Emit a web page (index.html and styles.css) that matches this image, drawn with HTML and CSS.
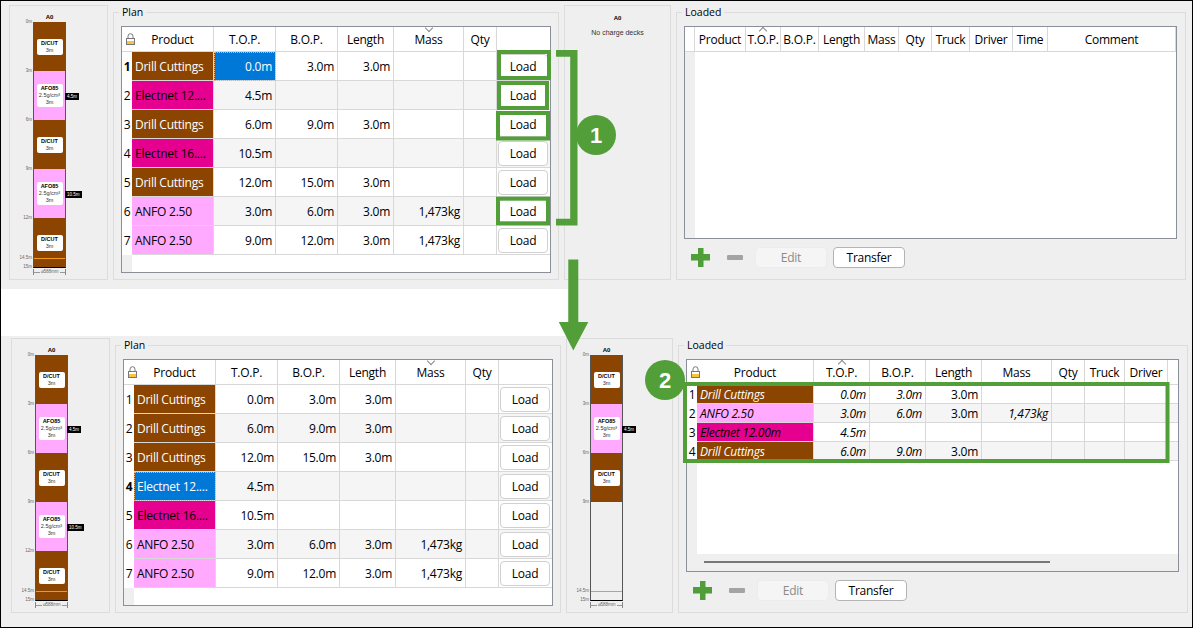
FILE: index.html
```html
<!DOCTYPE html>
<html lang="en">
  <head>
    <meta charset="UTF-8" />
    <title>Plan and Loaded decks</title>
    <link rel="stylesheet" href="styles.css">
  </head>
  <body>
    <div class="shot">

      <!-- before loading -->
      <div class="window window-top">
        <div class="panel strip-panel">
          <div class="strip-title">A0</div>
          <div class="column">
            <div class="seg brown"><span class="depth">0m</span><div class="card"><b>D/CUT</b>3m</div></div>
            <div class="seg pink"><span class="depth">3m</span><div class="card"><b>AFO85</b>2.5g/cm³<br>3m</div><span class="tag">4.5m</span></div>
            <div class="seg brown"><span class="depth">6m</span><div class="card"><b>D/CUT</b>3m</div></div>
            <div class="seg pink"><span class="depth">9m</span><div class="card"><b>AFO85</b>2.5g/cm³<br>3m</div><span class="tag">10.5m</span></div>
            <div class="seg brown"><span class="depth">12m</span><div class="card"><b>D/CUT</b>3m</div></div>
            <span class="depth depth-water">14.5m</span>
            <span class="depth depth-end">15m</span>
            <div class="water"></div>
          </div>
          <div class="dim">⌀588mm</div>
        </div>

        <fieldset class="group group-plan">
          <legend>Plan</legend>
          <div class="frame frame-plan">
            <table class="grid plan-grid">
              <colgroup><col class="c10"><col class="c82"><col class="c62"><col class="c62"><col class="c56"><col class="c70"><col class="c33"><col class="c53"></colgroup>
              <tr>
                <th class="corner"><svg class="lock" width="9" height="12" viewBox="0 0 9 12"><path d="M2 6V3.2a2.5 2.5 0 0 1 5 0V6" fill="none" stroke="#777"/><rect x=".5" y="5.5" width="8" height="6" fill="#fff" stroke="#777"/><rect x="1" y="8" width="7" height="3" fill="#f7c43c"/></svg></th>
                <th>Product</th><th>T.O.P.</th><th>B.O.P.</th><th>Length</th><th class="sort-down">Mass</th><th>Qty</th><th class="last"></th>
              </tr>
              <tr>
                <td class="num current">1</td><td class="product brown-cell">Drill Cuttings</td><td class="val selected">0.0m</td><td class="val">3.0m</td><td class="val">3.0m</td><td></td><td></td><td class="action"><button>Load</button></td>
              </tr>
              <tr class="alt">
                <td class="num">2</td><td class="product magenta-cell">Electnet 12....</td><td class="val">4.5m</td><td></td><td></td><td></td><td></td><td class="action"><button>Load</button></td>
              </tr>
              <tr>
                <td class="num">3</td><td class="product brown-cell">Drill Cuttings</td><td class="val">6.0m</td><td class="val">9.0m</td><td class="val">3.0m</td><td></td><td></td><td class="action"><button>Load</button></td>
              </tr>
              <tr class="alt">
                <td class="num">4</td><td class="product magenta-cell">Electnet 16....</td><td class="val">10.5m</td><td></td><td></td><td></td><td></td><td class="action"><button>Load</button></td>
              </tr>
              <tr>
                <td class="num">5</td><td class="product brown-cell">Drill Cuttings</td><td class="val">12.0m</td><td class="val">15.0m</td><td class="val">3.0m</td><td></td><td></td><td class="action"><button>Load</button></td>
              </tr>
              <tr class="alt">
                <td class="num">6</td><td class="product pink-cell">ANFO 2.50</td><td class="val">3.0m</td><td class="val">6.0m</td><td class="val">3.0m</td><td class="val">1,473kg</td><td></td><td class="action"><button>Load</button></td>
              </tr>
              <tr>
                <td class="num">7</td><td class="product pink-cell">ANFO 2.50</td><td class="val">9.0m</td><td class="val">12.0m</td><td class="val">3.0m</td><td class="val">1,473kg</td><td></td><td class="action"><button>Load</button></td>
              </tr>
            </table>
            <div class="filler"></div>
          </div>
        </fieldset>

        <div class="panel strip-panel-wide">
          <div class="strip-title strip-title-wide">A0</div>
          <div class="no-decks">No charge decks</div>
        </div>

        <fieldset class="group group-loaded">
          <legend>Loaded</legend>
          <div class="frame frame-loaded">
            <table class="grid">
              <colgroup><col class="c10"><col class="c51"><col class="c35"><col class="c38"><col class="c46"><col class="c34"><col class="c33"><col class="c38"><col class="c43"><col class="c35"><col class="c128"></colgroup>
              <tr>
                <th class="corner lined"></th><th>Product</th><th class="sort-up">T.O.P.</th><th>B.O.P.</th><th>Length</th><th>Mass</th><th>Qty</th><th>Truck</th><th>Driver</th><th>Time</th><th>Comment</th>
              </tr>
            </table>
            <div class="filler"></div>
          </div>
          <div class="toolbar">
            <svg class="add" width="19" height="19" viewBox="0 0 19 19"><path d="M7 0h5.5v6H19v6.500h-6.500V19H7v-6.500H0V6h7z" fill="#4f9e38"/></svg>
            <span class="remove"></span>
            <button class="tool-btn" disabled>Edit</button>
            <button class="tool-btn">Transfer</button>
          </div>
        </fieldset>
      </div>

      <div class="gap"><div class="gap-white"></div></div>

      <!-- after loading -->
      <div class="window window-bottom">
        <div class="panel strip-panel">
          <div class="strip-title">A0</div>
          <div class="column">
            <div class="seg brown"><span class="depth">0m</span><div class="card"><b>D/CUT</b>3m</div></div>
            <div class="seg pink"><span class="depth">3m</span><div class="card"><b>AFO85</b>2.5g/cm³<br>3m</div><span class="tag">4.5m</span></div>
            <div class="seg brown"><span class="depth">6m</span><div class="card"><b>D/CUT</b>3m</div></div>
            <div class="seg pink"><span class="depth">9m</span><div class="card"><b>AFO85</b>2.5g/cm³<br>3m</div><span class="tag">10.5m</span></div>
            <div class="seg brown"><span class="depth">12m</span><div class="card"><b>D/CUT</b>3m</div></div>
            <span class="depth depth-water">14.5m</span>
            <span class="depth depth-end">15m</span>
            <div class="water"></div>
          </div>
          <div class="dim">⌀588mm</div>
        </div>

        <fieldset class="group group-plan">
          <legend>Plan</legend>
          <div class="frame frame-plan">
            <table class="grid plan-grid">
              <colgroup><col class="c10"><col class="c82"><col class="c62"><col class="c62"><col class="c56"><col class="c70"><col class="c33"><col class="c53"></colgroup>
              <tr>
                <th class="corner"><svg class="lock" width="9" height="12" viewBox="0 0 9 12"><path d="M2 6V3.2a2.5 2.5 0 0 1 5 0V6" fill="none" stroke="#777"/><rect x=".5" y="5.5" width="8" height="6" fill="#fff" stroke="#777"/><rect x="1" y="8" width="7" height="3" fill="#f7c43c"/></svg></th>
                <th>Product</th><th>T.O.P.</th><th>B.O.P.</th><th>Length</th><th class="sort-down">Mass</th><th>Qty</th><th class="last"></th>
              </tr>
              <tr>
                <td class="num">1</td><td class="product brown-cell">Drill Cuttings</td><td class="val">0.0m</td><td class="val">3.0m</td><td class="val">3.0m</td><td></td><td></td><td class="action"><button>Load</button></td>
              </tr>
              <tr class="alt">
                <td class="num">2</td><td class="product brown-cell">Drill Cuttings</td><td class="val">6.0m</td><td class="val">9.0m</td><td class="val">3.0m</td><td></td><td></td><td class="action"><button>Load</button></td>
              </tr>
              <tr>
                <td class="num">3</td><td class="product brown-cell">Drill Cuttings</td><td class="val">12.0m</td><td class="val">15.0m</td><td class="val">3.0m</td><td></td><td></td><td class="action"><button>Load</button></td>
              </tr>
              <tr class="alt">
                <td class="num current">4</td><td class="product selected">Electnet 12....</td><td class="val">4.5m</td><td></td><td></td><td></td><td></td><td class="action"><button>Load</button></td>
              </tr>
              <tr>
                <td class="num">5</td><td class="product magenta-cell">Electnet 16....</td><td class="val">10.5m</td><td></td><td></td><td></td><td></td><td class="action"><button>Load</button></td>
              </tr>
              <tr class="alt">
                <td class="num">6</td><td class="product pink-cell">ANFO 2.50</td><td class="val">3.0m</td><td class="val">6.0m</td><td class="val">3.0m</td><td class="val">1,473kg</td><td></td><td class="action"><button>Load</button></td>
              </tr>
              <tr>
                <td class="num">7</td><td class="product pink-cell">ANFO 2.50</td><td class="val">9.0m</td><td class="val">12.0m</td><td class="val">3.0m</td><td class="val">1,473kg</td><td></td><td class="action"><button>Load</button></td>
              </tr>
            </table>
            <div class="filler"></div>
          </div>
        </fieldset>

        <div class="panel strip-panel-wide">
          <div class="strip-title">A0</div>
          <div class="column">
            <div class="seg brown"><span class="depth">0m</span><div class="card"><b>D/CUT</b>3m</div></div>
            <div class="seg pink"><span class="depth">3m</span><div class="card"><b>AFO85</b>2.5g/cm³<br>3m</div><span class="tag">4.5m</span></div>
            <div class="seg brown"><span class="depth">6m</span><div class="card"><b>D/CUT</b>3m</div></div>
            <div class="seg seg-empty"><span class="depth">9m</span></div>
            <span class="depth depth-water">14.5m</span>
            <span class="depth depth-end">15m</span>
            <div class="water"></div>
          </div>
          <div class="dim">⌀588mm</div>
        </div>

        <fieldset class="group group-loaded">
          <legend>Loaded</legend>
          <div class="frame frame-loaded">
            <table class="grid compact">
              <colgroup><col class="c10"><col class="c117"><col class="c56"><col class="c56"><col class="c56"><col class="c70"><col class="c33"><col class="c40"><col class="c43"><col class="c10"></colgroup>
              <tr>
                <th class="corner"><svg class="lock" width="9" height="12" viewBox="0 0 9 12"><path d="M2 6V3.2a2.5 2.5 0 0 1 5 0V6" fill="none" stroke="#777"/><rect x=".5" y="5.5" width="8" height="6" fill="#fff" stroke="#777"/><rect x="1" y="8" width="7" height="3" fill="#f7c43c"/></svg></th>
                <th>Product</th><th class="sort-up">T.O.P.</th><th>B.O.P.</th><th>Length</th><th>Mass</th><th>Qty</th><th>Truck</th><th>Driver</th><th class="last"></th>
              </tr>
              <tr>
                <td class="num">1</td><td class="product brown-cell em">Drill Cuttings</td><td class="val em">0.0m</td><td class="val em">3.0m</td><td class="val">3.0m</td><td></td><td></td><td></td><td></td><td class="last"></td>
              </tr>
              <tr class="alt">
                <td class="num">2</td><td class="product pink-cell em">ANFO 2.50</td><td class="val em">3.0m</td><td class="val em">6.0m</td><td class="val">3.0m</td><td class="val em">1,473kg</td><td></td><td></td><td></td><td class="last"></td>
              </tr>
              <tr>
                <td class="num">3</td><td class="product magenta-cell em">Electnet 12.00m</td><td class="val em">4.5m</td><td></td><td></td><td></td><td></td><td></td><td></td><td class="last"></td>
              </tr>
              <tr class="alt">
                <td class="num">4</td><td class="product brown-cell em">Drill Cuttings</td><td class="val em">6.0m</td><td class="val em">9.0m</td><td class="val">3.0m</td><td></td><td></td><td></td><td></td><td class="last"></td>
              </tr>
            </table>
            <div class="filler"></div>
            <div class="scrollbar"><div class="thumb"></div></div>
          </div>
          <div class="toolbar">
            <svg class="add" width="19" height="19" viewBox="0 0 19 19"><path d="M7 0h5.5v6H19v6.500h-6.500V19H7v-6.500H0V6h7z" fill="#4f9e38"/></svg>
            <span class="remove"></span>
            <button class="tool-btn" disabled>Edit</button>
            <button class="tool-btn">Transfer</button>
          </div>
        </fieldset>
      </div>

      <!-- green callouts drawn over the screenshot -->
      <svg class="callouts" width="1193" height="628" viewBox="0 0 1193 628">
        <g fill="none" stroke="#529e39" stroke-width="4">
          <rect x="499" y="52" width="50" height="26"/>
          <rect x="499" y="83" width="48" height="25"/>
          <rect x="498" y="113" width="50" height="25.500"/>
          <rect x="498" y="198.700" width="50" height="24.600"/>
          <rect x="685" y="384" width="482.500" height="77"/>
        </g>
        <path d="M556 50h21.500v175.500H556v-6.700h14.200V56.700H556z" fill="#529e39"/>
        <path d="M568.300 259.500h10v62.500h10l-15 28.500-14.500-28.500h9.500z" fill="#529e39"/>
        <circle cx="596" cy="135" r="20" fill="#529e39"/>
        <circle cx="665" cy="380" r="20" fill="#529e39"/>
        <text class="callout-num" x="596" y="143">1</text>
        <text class="callout-num" x="665" y="388">2</text>
      </svg>
    </div>
  </body>
</html>
```

FILE: styles.css
```css
* {
  box-sizing: border-box;
}

body {
  margin: 0;
  font-family: "Open Sans", sans-serif;
  font-size: 12px;
  letter-spacing: -0.25px;
  color: #000;
}

.shot {
  position: relative;
  width: 1193px;
  height: 628px;
  border: 1px solid #000;
  background: #efefef;
  display: flex;
  flex-direction: column;
  overflow: hidden;
}

.window {
  display: flex;
  gap: 5px;
  align-items: flex-start;
}

.window-top {
  height: 288px;
  padding: 4px 0 0 8px;
}

.window-bottom {
  height: 291px;
  padding: 2px 0 0 10px;
}

.gap {
  height: 47px;
}

.gap-white {
  width: 567px;
  height: 100%;
  background: #fff;
}

/* Strip panels */
.panel {
  height: 275px;
  border: 1px solid #dcdcdc;
  letter-spacing: 0;
}

.strip-panel {
  width: 99px;
  padding-left: 23px;
}

.strip-panel-wide {
  width: 107px;
  padding-left: 23px;
}

.strip-title {
  width: 33px;
  height: 16px;
  padding-top: 8px;
  font-family: "Liberation Sans", sans-serif;
  font-size: 6px;
  line-height: 7px;
  font-weight: bold;
  text-align: center;
}

.strip-title-wide {
  margin-left: -23px;
  width: 105px;
  padding-top: 9px;
}

.no-decks {
  margin: 2px 0 0 -23px;
  width: 105px;
  padding-top: 5px;
  font-family: "Liberation Sans", sans-serif;
  font-size: 7px;
  text-align: center;
  color: #333;
}

.column {
  position: relative;
  width: 33px;
  height: 246px;
  border-left: 1px solid #555;
  border-right: 1px solid #555;
  border-bottom: 1px solid #000;
  display: flex;
  flex-direction: column;
  font-family: "Liberation Sans", sans-serif;
}

.seg {
  position: relative;
  flex: 1;
  display: flex;
  align-items: center;
  justify-content: center;
}

.seg-empty {
  flex: 2;
}

.brown {
  background: #8b4500;
}

.pink {
  background: #ffaaff;
}

.card {
  width: 26px;
  padding: 1px 0;
  background: #fff;
  border-radius: 2px;
  font-size: 5.5px;
  line-height: 7px;
  text-align: center;
  color: #333;
}

.card b {
  display: block;
  color: #000;
}

.depth {
  position: absolute;
  right: calc(100% + 2px);
  top: -3px;
  font-size: 4.5px;
  line-height: 6px;
  color: #666;
  white-space: nowrap;
}

.depth-water {
  top: auto;
  bottom: 6px;
}

.depth-end {
  top: auto;
  bottom: -3px;
}

.tag {
  position: absolute;
  left: 100%;
  top: 50%;
  margin-top: -3px;
  padding: 0 2px;
  height: 7px;
  background: #000;
  color: #fff;
  font-size: 4.5px;
  line-height: 7px;
  white-space: nowrap;
}

.water {
  position: absolute;
  left: 0;
  right: 0;
  bottom: 8px;
  height: 1px;
  background: #f49a12;
}

.dim {
  width: 33px;
  height: 6px;
  margin-top: 1px;
  display: flex;
  align-items: center;
  gap: 1px;
  border-left: 1px solid #888;
  border-right: 1px solid #888;
  font-family: "Liberation Sans", sans-serif;
  font-size: 4.5px;
  line-height: 6px;
  color: #666;
  white-space: nowrap;
}

.dim::before,
.dim::after {
  content: "";
  flex: 1;
  height: 1px;
  background: #999;
}

/* Group boxes */
.group {
  height: 275px;
  min-width: 0;
  margin: 0;
  padding: 7px 7px 0;
  border: 1px solid #dcdcdc;
}

.group legend {
  margin-left: -2px;
  padding: 0 3px;
  font-size: 10.5px;
  letter-spacing: 0;
  line-height: 14px;
}

.group-plan {
  width: 446px;
}

.group-loaded {
  width: 510px;
}

/* Tables */
.frame {
  display: flex;
  flex-direction: column;
  border: 1px solid #8a8f99;
  background: #fff;
}

.frame-plan {
  width: 430px;
  height: 247px;
}

.frame-loaded {
  width: 493px;
  height: 213px;
}

.filler {
  flex: 1;
  border-left: 10px solid #efefef;
}

.grid {
  table-layout: fixed;
  width: 100%;
  border-collapse: separate;
  border-spacing: 0;
}

.c10 { width: 10px; }
.c33 { width: 33px; }
.c34 { width: 34px; }
.c35 { width: 35px; }
.c38 { width: 38px; }
.c40 { width: 40px; }
.c43 { width: 43px; }
.c46 { width: 46px; }
.c51 { width: 51px; }
.c53 { width: 53px; }
.c56 { width: 56px; }
.c62 { width: 62px; }
.c70 { width: 70px; }
.c82 { width: 82px; }
.c117 { width: 117px; }
.c128 { width: 128px; }

.grid th {
  position: relative;
  height: 25px;
  padding: 1px 0 0;
  font-weight: normal;
  white-space: nowrap;
  text-align: center;
  border-right: 1px solid #d8d8d8;
  border-bottom: 1px solid #d8d8d8;
}

.grid th.corner {
  border-right: none;
}

.grid th.corner.lined {
  border-right: 1px solid #d8d8d8;
}

.grid th.last {
  border-right: none;
}

.lock {
  position: absolute;
  left: 4px;
  top: 6px;
}

.sort-down::before,
.sort-up::before {
  content: "";
  position: absolute;
  left: 50%;
  width: 5px;
  height: 5px;
  margin-left: -3px;
  transform: rotate(45deg);
}

.sort-down::before {
  top: -2px;
  border-right: 1px solid #888;
  border-bottom: 1px solid #888;
}

.sort-up::before {
  top: 1px;
  border-left: 1px solid #888;
  border-top: 1px solid #888;
}

.grid td {
  height: 29px;
  padding: 0;
  white-space: nowrap;
  overflow: hidden;
  border-right: 1px solid #d8d8d8;
  border-bottom: 1px solid #d8d8d8;
}

.compact td {
  height: 19px;
}

.alt td {
  background: #f5f5f5;
}

.grid td.num,
.alt td.num {
  background: #fff;
  border-right: none;
  border-bottom: none;
  text-align: center;
}

.current {
  font-weight: bold;
}

.grid td.product {
  padding-left: 3px;
}

.grid td.val {
  padding-right: 3px;
  text-align: right;
}

.grid td.brown-cell {
  background: #8b4500;
  color: #fff;
}

.grid td.magenta-cell {
  background: #e6008f;
}

.grid td.pink-cell {
  background: #ffaaff;
}

.grid td.selected {
  background: #0078d7;
  color: #fff;
  outline: 1px dotted #f0b070;
  outline-offset: -1px;
}

.em {
  font-style: italic;
}

.grid td.action {
  padding: 0;
  border-right: none;
  text-align: center;
}

.grid td.last {
  border-right: none;
}

.action button {
  display: block;
  width: 50px;
  height: 25px;
  margin: 0 auto 0 1px;
  padding: 0;
  background: #fff;
  border: 1px solid #d0d0d0;
  border-radius: 4px;
  font-family: inherit;
  font-size: 12px;
  letter-spacing: inherit;
}

/* Scrollbar */
.scrollbar {
  height: 17px;
  padding: 7px 0 0 17px;
  background: #efefef;
}

.thumb {
  width: 346px;
  height: 2px;
  background: #777;
}

/* Buttons under Loaded */
.toolbar {
  display: flex;
  align-items: center;
  height: 21px;
  margin-top: 8px;
  padding-left: 7px;
}

.add {
  flex: none;
}

.remove {
  width: 16px;
  height: 5px;
  margin-left: 17px;
  border-radius: 1px;
  background: #a3a3a3;
}

.tool-btn {
  width: 72px;
  height: 21px;
  margin-left: 12px;
  padding: 0;
  background: #fff;
  border: 1px solid #b4b4b4;
  border-radius: 4px;
  font-family: inherit;
  font-size: 12px;
  letter-spacing: inherit;
  color: #000;
}

.tool-btn + .tool-btn {
  margin-left: 6px;
}

.tool-btn:disabled {
  background: #f5f5f5;
  border-color: #ececec;
  color: #8a8a8a;
}

/* Callouts */
.callouts {
  position: absolute;
  left: -1px;
  top: -1px;
}

.callout-num {
  font-family: "Liberation Sans", sans-serif;
  font-size: 22px;
  font-weight: bold;
  fill: #fff;
  text-anchor: middle;
}
```
